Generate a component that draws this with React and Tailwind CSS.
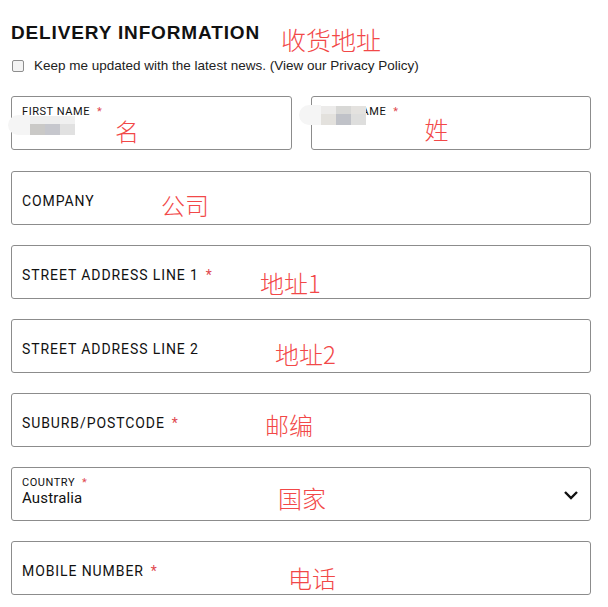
import React from "react";

const cjk = { fontFamily: '"Noto Sans CJK SC", sans-serif' };
const din = { fontFamily: 'Roboto, "Liberation Sans", sans-serif' };

const Note = ({ children, className }) => (
  <span
    className={`absolute text-[24px] font-light leading-none text-[#f24848] ${className}`}
    style={cjk}
  >
    {children}
  </span>
);

const Star = () => <span className="ml-[7px] text-[#e0484f]">*</span>;

// pixelated blur over the name values
const Mosaic = ({ className, top, bottom }) => (
  <div className={`absolute flex items-center ${className}`}>
    <div className="h-[20px] w-[22px] rounded-l-full bg-[#f5f5f5]" />
    <div className="flex flex-col">
      <div className="flex">
        {top.map((c, i) => (
          <div key={i} className="h-[8px] w-[15px]" style={{ background: c }} />
        ))}
      </div>
      <div className="flex">
        {bottom.map((c, i) => (
          <div key={i} className="h-[11px] w-[15px]" style={{ background: c }} />
        ))}
      </div>
    </div>
  </div>
);

const Field = ({ label, required, note, noteClass }) => (
  <div className="relative flex h-[54px] shrink-0 items-center rounded-[3px] border border-[#8c8c8c] px-[10px] pt-[7px]">
    <span className="text-[14px] tracking-[0.065em] text-[#111]" style={din}>
      {label}
      {required && <Star />}
    </span>
    <Note className={noteClass}>{note}</Note>
  </div>
);

export default function App() {
  return (
    <div className="min-h-screen bg-white px-[11px] pt-[22px] text-[#111]">
      <div className="relative">
        <h1
          className="text-[19px] font-bold tracking-[0.045em] leading-[22px]"
          style={{ fontFamily: '"Liberation Sans", Arial, sans-serif' }}
        >
          DELIVERY INFORMATION
        </h1>
        <Note className="left-[270px] top-[5px] text-[25px]">收货地址</Note>
      </div>

      <label className="mt-[12px] flex items-center gap-[10px]">
        <span className="ml-[1px] h-[12px] w-[12px] rounded-[2px] border border-[#8e8e8e] bg-[#f4f4f4]" />
        <span
          className="text-[13.5px] text-[#222]"
          style={{ fontFamily: '"Liberation Sans", Arial, sans-serif' }}
        >
          Keep me updated with the latest news. (View our Privacy Policy)
        </span>
      </label>

      <div className="mt-[20px] flex flex-col gap-[20px] pr-[6px]">
        <div className="grid h-[55px] shrink-0 grid-cols-2 gap-[19px]">
          <div className="relative h-[54px] rounded-[3px] border border-[#8c8c8c] px-[10px] pt-[9px]">
            <div className="text-[11px] leading-none tracking-[0.05em] text-[#111]" style={din}>
              FIRST NAME
              <Star />
            </div>
            <Mosaic
              className="left-[-4px] top-[18px]"
              top={["#eeeeee", "#eeeeee", "#f0f0f0"]}
              bottom={["#cac9c7", "#c6c7cd", "#e1e1e1"]}
            />
            <Note className="left-[103px] top-[22px]">名</Note>
          </div>
          <div className="relative h-[54px] rounded-[3px] border border-[#8c8c8c] px-[10px] pt-[9px]">
            <div className="text-[11px] leading-none tracking-[0.05em] text-[#111]" style={din}>
              LAST NAME
              <Star />
            </div>
            <Mosaic
              className="left-[-13px] top-[8px]"
              top={["#ecebea", "#d8d8d6", "#e4e2df"]}
              bottom={["#e3e1dd", "#c0c2c8", "#dededd"]}
            />
            <Note className="left-[113px] top-[20px]">姓</Note>
          </div>
        </div>

        <Field label="COMPANY" note="公司" noteClass="left-[149px] top-[21px]" />
        <Field
          label="STREET ADDRESS LINE 1"
          required
          note="地址1"
          noteClass="left-[248px] top-[25px]"
        />
        <Field
          label="STREET ADDRESS LINE 2"
          note="地址2"
          noteClass="left-[263px] top-[22px]"
        />
        <Field
          label="SUBURB/POSTCODE"
          required
          note="邮编"
          noteClass="left-[253px] top-[19px]"
        />

        <div className="relative flex h-[54px] shrink-0 items-start justify-between rounded-[3px] border border-[#8c8c8c] px-[10px] pt-[9px]">
          <div className="flex flex-col leading-none" style={din}>
            <span className="text-[11px] tracking-[0.05em] text-[#111]">
              COUNTRY
              <Star />
            </span>
            <span className="mt-[3px] text-[15px] tracking-[0.01em] text-[#111]">Australia</span>
          </div>
          <svg width="16" height="10" viewBox="0 0 16 10" className="mr-[1px] mt-[13px]">
            <path d="M2 2l6 6 6-6" fill="none" stroke="#111" strokeWidth="2.4" />
          </svg>
          <Note className="left-[266px] top-[18px]">国家</Note>
        </div>

        <Field
          label="MOBILE NUMBER"
          required
          note="电话"
          noteClass="left-[276px] top-[24px]"
        />
      </div>
    </div>
  );
}
